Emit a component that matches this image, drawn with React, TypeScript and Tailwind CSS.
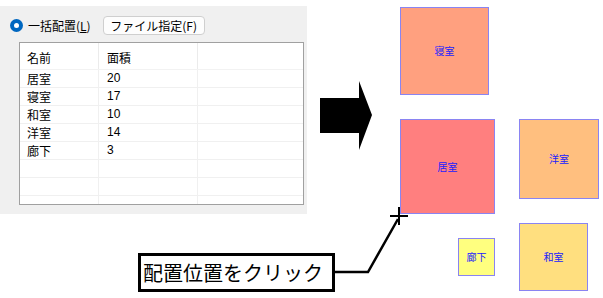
import React from 'react';

type Room = { name: string; area: string };

const rooms: Room[] = [
  { name: '居室', area: '20' },
  { name: '寝室', area: '17' },
  { name: '和室', area: '10' },
  { name: '洋室', area: '14' },
  { name: '廊下', area: '3' },
  { name: '', area: '' },
  { name: '', area: '' },
  { name: '', area: '' },
];

// Placed blocks on the drawing canvas (coordinates are the content)
const blocks = [
  { name: '寝室', left: 'left-[400px] top-[7px] w-[89px] h-[88px]', bg: 'bg-[#ffa07f]' },
  { name: '居室', left: 'left-[400px] top-[119px] w-[95px] h-[95px]', bg: 'bg-[#ff7f7f]' },
  { name: '洋室', left: 'left-[519px] top-[119px] w-[80px] h-[80px]', bg: 'bg-[#ffbf7f]' },
  { name: '廊下', left: 'left-[458px] top-[238px] w-[37px] h-[38px]', bg: 'bg-[#ffff7f]' },
  { name: '和室', left: 'left-[519px] top-[223px] w-[69px] h-[68px]', bg: 'bg-[#ffdf7f]' },
];

const RoomTable: React.FC = () => {
  return (
    <div className="ml-[19px] mt-[7px] w-[285px] h-[163px] bg-white border border-[#a0a0a0] overflow-hidden">
      <div className="flex h-[27px] border-b border-[#f2f2f2]">
        <div className="w-[79px] pl-[7px] pt-[8px] text-[12px] leading-[14px] border-r border-[#ebebeb]">名前</div>
        <div className="w-[99px] pl-[8px] pt-[8px] text-[12px] leading-[14px] border-r border-[#ebebeb]">面積</div>
        <div className="flex-1" />
      </div>
      {rooms.map((r, i) => (
        <div key={i} className="flex h-[18px] border-b border-[#f0f0f0]">
          <div className="w-[79px] pl-[7px] text-[12px] leading-[17px] border-r border-[#f0f0f0]">{r.name}</div>
          <div className="w-[99px] pl-[8px] text-[12px] leading-[17px] border-r border-[#f0f0f0] font-['Liberation_Sans_Narrow','Liberation_Sans',sans-serif]">{r.area}</div>
          <div className="flex-1" />
        </div>
      ))}
    </div>
  );
};

const App: React.FC = () => {
  return (
    <div className="relative w-[603px] h-[298px] bg-white overflow-hidden text-black font-['Noto_Sans_CJK_JP','Noto_Sans',sans-serif]">
      {/* dialog panel */}
      <div className="mt-[6px] w-[307px] h-[208px] bg-[#f0f0f0] pt-[10px]">
        <div className="flex items-center h-[19px]">
          <span className="ml-[10px] w-[13px] h-[13px] rounded-full bg-[#0067c0] flex items-center justify-center">
            <span className="w-[5px] h-[5px] rounded-full bg-white" />
          </span>
          <span className="ml-[5px] text-[12px] leading-[14px]">
            一括配置(<span className="underline">L</span>)
          </span>
          <button className="ml-[12px] w-[102px] h-[19px] rounded-[4px] border border-[#cfcfcf] bg-[#fdfdfd] text-[12px] leading-[14px]">
            ファイル指定(F)
          </button>
        </div>
        <RoomTable />
      </div>

      {/* arrow, cursor and leader line */}
      <svg className="absolute left-0 top-0" width="603" height="298">
        <polygon points="320,98 359,98 359,81 372,115 359,150 359,133 320,133" fill="#000" />
        <polyline points="334,272 368,272 398,219" fill="none" stroke="#000" strokeWidth="2.5" />
        <line x1="390" y1="216" x2="408" y2="216" stroke="#000" strokeWidth="2" />
        <line x1="399" y1="207" x2="399" y2="225" stroke="#000" strokeWidth="2" />
      </svg>

      {/* placed rooms */}
      {blocks.map((b) => (
        <div
          key={b.name}
          className={`absolute ${b.left} ${b.bg} border border-[#8a84f2] flex items-center justify-center text-[10px] leading-[12px] text-[#2020ff]`}
        >
          {b.name}
        </div>
      ))}

      {/* callout */}
      <div className="absolute left-[138px] top-[253px] w-[197px] h-[39px] border-[3px] border-black bg-white pl-[2px] flex items-center text-[20px] leading-[24px] whitespace-nowrap">
        配置位置をクリック
      </div>
    </div>
  );
};

export default App;
